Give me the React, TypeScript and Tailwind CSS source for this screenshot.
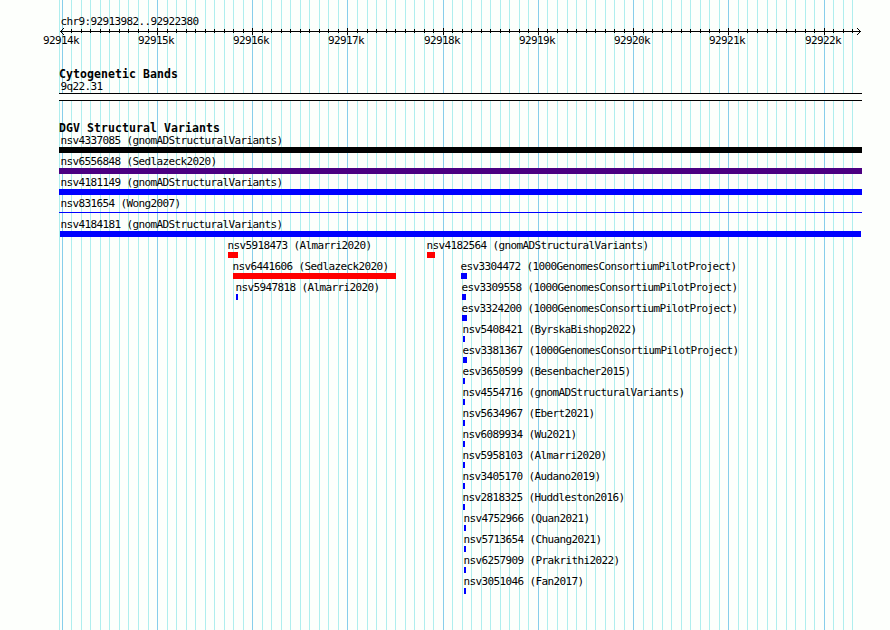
const PANEL_LEFT = 59
const MINOR_STEP = 9.5233
const GRID_START = 62.295

const BLACK = '#000000'
const INDIGO = '#4b0082'
const BLUE = '#0000ff'
const RED = '#ff0000'

interface Variant {
  name: string
  source: string
  /** Left edge of the label, px */
  labelX: number
  start: number
  end: number
  color: string
  /** Drawn as a single hairline instead of a box */
  thin?: boolean
}

function variant(name: string, source: string, start: number, end: number, color: string): Variant {
  return { name, source, labelX: start - 0.5, start, end, color }
}

// One entry per lane; a lane can hold more than one variant
const LANES: Variant[][] = [
  [{ name: 'nsv4337085', source: 'gnomADStructuralVariants', labelX: 60.5, start: 59, end: 862, color: BLACK }],
  [{ name: 'nsv6556848', source: 'Sedlazeck2020', labelX: 60.5, start: 59, end: 862, color: INDIGO }],
  [{ name: 'nsv4181149', source: 'gnomADStructuralVariants', labelX: 60.5, start: 59, end: 862, color: BLUE }],
  [{ name: 'nsv831654', source: 'Wong2007', labelX: 60.5, start: 59, end: 862, color: BLUE, thin: true }],
  [{ name: 'nsv4184181', source: 'gnomADStructuralVariants', labelX: 60.5, start: 60, end: 861, color: BLUE }],
  [
    variant('nsv5918473', 'Almarri2020', 228, 238, RED),
    variant('nsv4182564', 'gnomADStructuralVariants', 427, 435, RED),
  ],
  [
    variant('nsv6441606', 'Sedlazeck2020', 233, 396, RED),
    variant('esv3304472', '1000GenomesConsortiumPilotProject', 461, 467, BLUE),
  ],
  [
    variant('nsv5947818', 'Almarri2020', 236, 238, BLUE),
    variant('esv3309558', '1000GenomesConsortiumPilotProject', 462, 466, BLUE),
  ],
  [variant('esv3324200', '1000GenomesConsortiumPilotProject', 462, 467, BLUE)],
  [variant('nsv5408421', 'ByrskaBishop2022', 463, 465, BLUE)],
  [variant('esv3381367', '1000GenomesConsortiumPilotProject', 463, 467, BLUE)],
  [variant('esv3650599', 'Besenbacher2015', 463, 465, BLUE)],
  [variant('nsv4554716', 'gnomADStructuralVariants', 463, 465, BLUE)],
  [variant('nsv5634967', 'Ebert2021', 463, 465, BLUE)],
  [variant('nsv6089934', 'Wu2021', 463, 465, BLUE)],
  [variant('nsv5958103', 'Almarri2020', 463, 465, BLUE)],
  [variant('nsv3405170', 'Audano2019', 463, 465, BLUE)],
  [variant('nsv2818325', 'Huddleston2016', 463, 465, BLUE)],
  [variant('nsv4752966', 'Quan2021', 464, 466, BLUE)],
  [variant('nsv5713654', 'Chuang2021', 464, 466, BLUE)],
  [variant('nsv6257909', 'Prakrithi2022', 464, 466, BLUE)],
  [variant('nsv3051046', 'Fan2017', 464, 466, BLUE)],
]

const TICKS = Array.from({ length: 84 }, (_, i) => ({
  x: Math.floor(GRID_START + i * MINOR_STEP),
  major: i % 10 === 0,
}))

const MAJOR_TICKS = TICKS.filter(t => t.major)

function Gridlines() {
  return (
    <svg className="absolute inset-0" width="890" height="630" shapeRendering="crispEdges" aria-hidden="true">
      <rect x={PANEL_LEFT} y="0" width="1" height="630" fill="#afeeee" />
      {TICKS.map(t => (
        <rect key={t.x} x={t.x} y="0" width="1" height="630" fill={t.major ? '#87ceeb' : '#afeeee'} />
      ))}
    </svg>
  )
}

function Axis() {
  return (
    <svg className="block" width="890" height="7" shapeRendering="crispEdges" aria-hidden="true">
      <rect x="60" y="3" width="801" height="1" />
      {/* the arrow head takes the place of the first tick */}
      {TICKS.slice(1).map(t => (
        <rect key={t.x} x={t.x} y={t.major ? 0 : 1} width="1" height={t.major ? 7 : 4} />
      ))}
      <path d="M61 2h1v1h-1z M62 1h1v1h-1z M63 0h1v1h-1z M61 4h1v1h-1z M62 5h1v1h-1z M63 6h1v1h-1z" />
      <path d="M859 2h1v1h-1z M858 1h1v1h-1z M857 0h1v1h-1z M859 4h1v1h-1z M858 5h1v1h-1z M857 6h1v1h-1z" />
    </svg>
  )
}

function TrackTitle({ children }: { children: string }) {
  return <h2 className="h-[13px] pl-[59px] text-[11.5px] font-bold leading-3 tracking-[0.077px]">{children}</h2>
}

function Lane({ variants }: { variants: Variant[] }) {
  return (
    <div className="h-[21px]">
      {/* zero-width cells, so that each offset is relative to the previous start */}
      <div className="flex h-3">
        {variants.map((v, i) => (
          <div key={v.name} className="w-0 whitespace-pre" style={{ marginLeft: v.labelX - (variants[i - 1]?.labelX ?? 0) }}>
            {v.name} ({v.source})
          </div>
        ))}
      </div>
      <div className="flex h-[6px]">
        {variants.map((v, i) => (
          <div
            key={v.name}
            className={v.thin ? 'mt-[2px] h-px' : 'h-[6px]'}
            style={{
              marginLeft: v.start - (variants[i - 1]?.end ?? 0),
              width: v.end - v.start,
              backgroundColor: v.color,
            }}
          />
        ))}
      </div>
    </div>
  )
}

export default function App() {
  return (
    <main className="relative h-[630px] w-[890px] overflow-hidden bg-[#fdfffc] font-['DejaVu_Sans_Mono',monospace] text-[11px] leading-3 tracking-[-0.622px] text-black">
      <Gridlines />
      <div className="relative pt-4">
        <div className="h-3 pl-[60.5px]">chr9:92913982..92922380</div>
        <Axis />
        <div className="flex h-[33px]">
          {MAJOR_TICKS.map((t, i) => (
            <div key={t.x} className="w-0" style={{ marginLeft: i === 0 ? t.x - 19 : t.x - MAJOR_TICKS[i - 1].x }}>
              {92914 + i}k
            </div>
          ))}
        </div>

        <TrackTitle>Cytogenetic Bands</TrackTitle>
        <div className="h-3 pl-[60.5px]">9q22.31</div>
        <div className="ml-[59px] h-2 w-[803px] border-y border-black bg-[#fdfffc]" />

        <div className="pt-[21px]">
          <TrackTitle>DGV Structural Variants</TrackTitle>
          <div>
            {LANES.map(lane => (
              <Lane key={lane[0].name} variants={lane} />
            ))}
          </div>
        </div>
      </div>
    </main>
  )
}
